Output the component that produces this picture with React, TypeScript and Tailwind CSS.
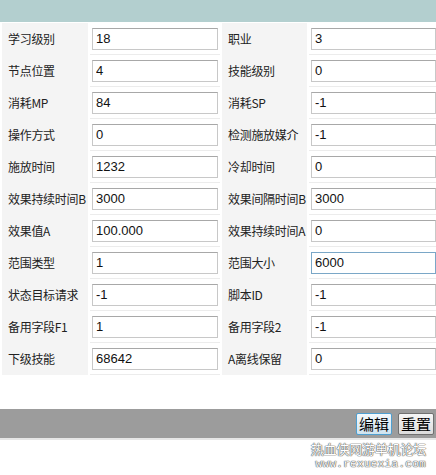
import React from 'react';

interface FieldType {
  label: string;
  value: string;
}

// two fields per row, label then value
const rows: [FieldType, FieldType][] = [
  [{ label: '学习级别', value: '18' }, { label: '职业', value: '3' }],
  [{ label: '节点位置', value: '4' }, { label: '技能级别', value: '0' }],
  [{ label: '消耗MP', value: '84' }, { label: '消耗SP', value: '-1' }],
  [{ label: '操作方式', value: '0' }, { label: '检测施放媒介', value: '-1' }],
  [{ label: '施放时间', value: '1232' }, { label: '冷却时间', value: '0' }],
  [{ label: '效果持续时间B', value: '3000' }, { label: '效果间隔时间B', value: '3000' }],
  [{ label: '效果值A', value: '100.000' }, { label: '效果持续时间A', value: '0' }],
  [{ label: '范围类型', value: '1' }, { label: '范围大小', value: '6000' }],
  [{ label: '状态目标请求', value: '-1' }, { label: '脚本ID', value: '-1' }],
  [{ label: '备用字段F1', value: '1' }, { label: '备用字段2', value: '-1' }],
  [{ label: '下级技能', value: '68642' }, { label: 'A离线保留', value: '0' }],
];

const labelFont =
  "font-['SimSun','Noto_Sans_CJK_SC','Liberation_Sans',sans-serif]";

const Label = ({ text }: { text: string }) => (
  <div
    className={`flex items-center bg-[#f4f4f4] pl-[6px] text-[12px] text-[#222] whitespace-nowrap tracking-[-0.3px] ${labelFont}`}
  >
    {text}
  </div>
);

const Value = ({ value, focused }: { value: string; focused?: boolean }) => (
  <div className="flex items-center bg-white border-b border-[#ececec] pl-[2px] pr-[2px]">
    <input
      defaultValue={value}
      className={`h-[22px] w-full px-[3px] bg-white text-[13px] text-[#111] font-['Liberation_Sans',Arial,sans-serif] outline-none border
      ${focused ? 'border-[#7aa7c7]' : 'border-[#c8c8c8] border-t-[#a8a8a8]'}`}
    />
  </div>
);

const App = () => {
  return (
    <div className="w-[436px] h-[475px] bg-white flex flex-col overflow-hidden">
      <div className="h-[22px] bg-[#b3cfcf] shrink-0" />
      <div className="grid grid-cols-[86px_130px_85px_129px] auto-rows-[32px] gap-x-[2px] gap-y-0 pl-[2px] pt-[1px]">
        {rows.map(([a, b]) => (
          <React.Fragment key={a.label}>
            <Label text={a.label} />
            <Value value={a.value} />
            <Label text={b.label} />
            <Value value={b.value} focused={b.label === '范围大小'} />
          </React.Fragment>
        ))}
      </div>
      <div className="flex-1" />
      <div className="h-[29px] bg-[#9c9c9c] flex items-center justify-end gap-[6px] pr-[2px] shrink-0">
        <button
          className={`h-[22px] w-[36px] rounded-[2px] border border-[#4f9fd0] bg-gradient-to-b from-[#f4f9fc] to-[#cfe3ef] text-[15px] text-black leading-none ${labelFont}`}
        >
          编辑
        </button>
        <button
          className={`h-[22px] w-[36px] rounded-[2px] border border-[#707070] bg-gradient-to-b from-[#f6f6f6] to-[#dcdcdc] text-[15px] text-black leading-none ${labelFont}`}
        >
          重置
        </button>
      </div>
      <div className="h-[37px] border-t-2 border-[#e6e6e6] flex flex-col items-end pr-[10px] shrink-0">
        <span
          className={`mt-[1px] h-[15px] text-[13px] leading-[15px] text-white tracking-[-0.2px] [text-shadow:0_0_1px_#555,0_0_1px_#555,0_0_1px_#555] ${labelFont}`}
        >
          热血侠网游单机论坛
        </span>
        <span className="mt-[3px] h-[11px] text-[11px] leading-[11px] text-white font-['Liberation_Mono',monospace] tracking-[0.3px] [text-shadow:0_0_1px_#555,0_0_1px_#555,0_0_1px_#555]">
          www.rexuexia.com
        </span>
      </div>
    </div>
  );
};

export default App;
